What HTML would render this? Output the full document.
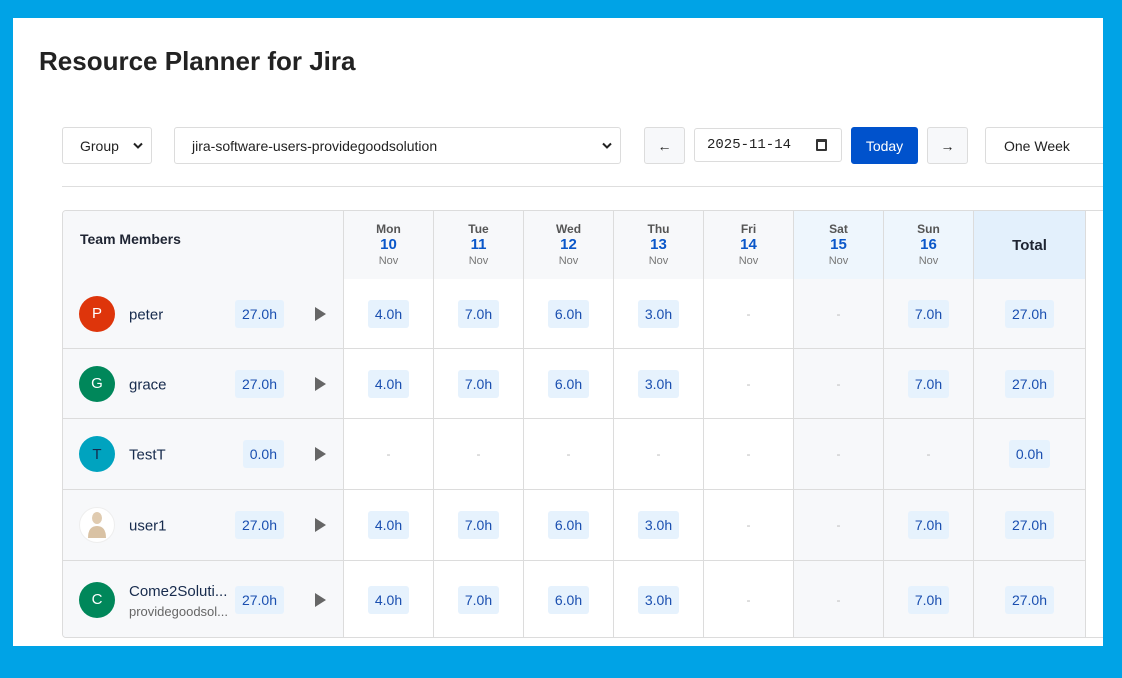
<!DOCTYPE html>
<html><head><meta charset="utf-8"><style>
*{box-sizing:border-box;margin:0;padding:0}
body{width:1122px;height:678px;background:#00a3e6;font-family:"Liberation Sans","DejaVu Sans",sans-serif;position:relative;overflow:hidden}
.panel{position:absolute;left:13px;top:18px;width:1090px;height:628px;background:#fff;overflow:hidden}
h1{position:absolute;left:26px;top:28px;font-size:26px;font-weight:bold;color:#222}
.ctl{position:absolute;top:109px;height:37px;border:1px solid #dcdcdc;border-radius:3px;background:#fff;font-size:14px;color:#222;display:flex;align-items:center}
.chev{position:absolute;right:8px;top:14px}
.hr{position:absolute;left:49px;top:168px;width:1050px;height:1px;background:#dedede}
.tbl{position:absolute;left:49px;top:192px;width:1100px;height:428px;border:1px solid #dcdcdc;border-radius:4px;overflow:hidden;background:#fff}
.row{position:absolute;left:0;display:grid;grid-template-columns:281px repeat(7,90px) 112px;width:1023px;border-bottom:1px solid #dcdcdc}
.row>div{border-right:1px solid #dcdcdc;display:flex;align-items:center;justify-content:center;position:relative}
.g{background:#f7f8fa}
.hd{text-align:center;flex-direction:column}
.hd b{display:block;font-size:12px;color:#555;line-height:14px}
.hd i{display:block;font-style:normal;font-weight:bold;font-size:15px;color:#0b57c9;line-height:18px}
.hd s{display:block;text-decoration:none;font-size:11px;color:#777;line-height:14px}
.bd{background:#e6f2fd;color:#1a4fb0;font-size:14px;border-radius:3px;height:28px;line-height:28px;padding:0 7px}
.dash{color:#bbb;font-size:12px}
.av{position:absolute;left:16px;top:50%;margin-top:-18px;width:36px;height:36px;border-radius:50%;color:#fff;font-size:15px;display:flex;align-items:center;justify-content:center}
.nm{position:absolute;left:66px;top:50%;transform:translateY(-45%);font-size:15px;color:#172b4d}
.nb{position:absolute;right:59px}
.tri{position:absolute;right:17px;width:0;height:0;border-left:11px solid #666;border-top:7px solid transparent;border-bottom:7px solid transparent}
</style></head><body>
<div class="panel">
<h1>Resource Planner for Jira</h1>
<div class="ctl" style="left:49px;width:90px;padding-left:17px">Group<svg class="chev" width="10" height="7" viewBox="0 0 10 7"><path d="M1 1.5L5 5.5L9 1.5" fill="none" stroke="#222" stroke-width="2"/></svg></div>
<div class="ctl" style="left:161px;width:447px;padding-left:17px">jira-software-users-providegoodsolution<svg class="chev" width="10" height="7" viewBox="0 0 10 7"><path d="M1 1.5L5 5.5L9 1.5" fill="none" stroke="#222" stroke-width="2"/></svg></div>
<div class="ctl" style="left:631px;width:41px;justify-content:center;background:#f7f8fa">&#8592;</div>
<div class="ctl" style="left:681px;width:148px;top:110px;height:34px;padding-left:12px;font-family:'Liberation Mono',monospace;font-size:14px">2025-11-14<span style="position:absolute;right:14px;width:11px;height:12px;border:2px solid #333;border-top-width:3px;border-radius:1px"></span></div>
<div class="ctl" style="left:838px;width:67px;background:#0052cc;border-color:#0052cc;color:#fff;justify-content:center">Today</div>
<div class="ctl" style="left:914px;width:41px;justify-content:center;background:#f7f8fa">&#8594;</div>
<div class="ctl" style="left:972px;width:140px;padding-left:18px">One Week</div>
<div class="hr"></div>
<div class="tbl">
<div class="row" style="top:0;height:68px;border-bottom:none">
<div class="g" style="justify-content:flex-start;align-items:flex-start;padding:20px 0 0 17px;font-weight:bold;font-size:14px;color:#1f2533">Team Members</div>
<div class="hd g"><b>Mon</b><i>10</i><s>Nov</s></div>
<div class="hd g"><b>Tue</b><i>11</i><s>Nov</s></div>
<div class="hd g"><b>Wed</b><i>12</i><s>Nov</s></div>
<div class="hd g"><b>Thu</b><i>13</i><s>Nov</s></div>
<div class="hd g"><b>Fri</b><i>14</i><s>Nov</s></div>
<div class="hd" style="background:#eef6fd"><b>Sat</b><i>15</i><s>Nov</s></div>
<div class="hd" style="background:#eef6fd"><b>Sun</b><i>16</i><s>Nov</s></div>
<div style="background:#e3f0fc;font-weight:bold;font-size:15px;color:#1f2533">Total</div>
</div>
<div class="row" style="top:68px;height:70px">
<div class="g"><div class="av" style="background:#de350b">P</div><div class="nm">peter</div><div class="bd nb">27.0h</div><div class="tri"></div></div>
<div><span class="bd">4.0h</span></div><div><span class="bd">7.0h</span></div><div><span class="bd">6.0h</span></div><div><span class="bd">3.0h</span></div><div><span class="dash">-</span></div><div class="g"><span class="dash">-</span></div><div class="g"><span class="bd">7.0h</span></div><div class="g"><span class="bd">27.0h</span></div>
</div>
<div class="row" style="top:138px;height:70px">
<div class="g"><div class="av" style="background:#00875a">G</div><div class="nm">grace</div><div class="bd nb">27.0h</div><div class="tri"></div></div>
<div><span class="bd">4.0h</span></div><div><span class="bd">7.0h</span></div><div><span class="bd">6.0h</span></div><div><span class="bd">3.0h</span></div><div><span class="dash">-</span></div><div class="g"><span class="dash">-</span></div><div class="g"><span class="bd">7.0h</span></div><div class="g"><span class="bd">27.0h</span></div>
</div>
<div class="row" style="top:208px;height:71px">
<div class="g"><div class="av" style="background:#00a3bf;color:#172b4d">T</div><div class="nm">TestT</div><div class="bd nb">0.0h</div><div class="tri"></div></div>
<div><span class="dash">-</span></div><div><span class="dash">-</span></div><div><span class="dash">-</span></div><div><span class="dash">-</span></div><div><span class="dash">-</span></div><div class="g"><span class="dash">-</span></div><div class="g"><span class="dash">-</span></div><div class="g"><span class="bd">0.0h</span></div>
</div>
<div class="row" style="top:279px;height:71px">
<div class="g"><div class="av" style="background:#fff;border:1px solid #eee"><svg width="24" height="30" viewBox="0 0 24 30"><ellipse cx="12" cy="8" rx="5" ry="6" fill="#e0cbb0"/><path d="M3 28 Q3 16 12 16 Q21 16 21 28 Z" fill="#d9c2a4"/></svg></div><div class="nm">user1</div><div class="bd nb">27.0h</div><div class="tri"></div></div>
<div><span class="bd">4.0h</span></div><div><span class="bd">7.0h</span></div><div><span class="bd">6.0h</span></div><div><span class="bd">3.0h</span></div><div><span class="dash">-</span></div><div class="g"><span class="dash">-</span></div><div class="g"><span class="bd">7.0h</span></div><div class="g"><span class="bd">27.0h</span></div>
</div>
<div class="row" style="top:350px;height:77px;border-bottom:none">
<div class="g"><div class="av" style="background:#00875a">C</div><div class="nm" style="line-height:20px">Come2Soluti...<br><span style="font-size:13px;color:#666">providegoodsol...</span></div><div class="bd nb">27.0h</div><div class="tri"></div></div>
<div><span class="bd">4.0h</span></div><div><span class="bd">7.0h</span></div><div><span class="bd">6.0h</span></div><div><span class="bd">3.0h</span></div><div><span class="dash">-</span></div><div class="g"><span class="dash">-</span></div><div class="g"><span class="bd">7.0h</span></div><div class="g"><span class="bd">27.0h</span></div>
</div>
</div>
</div>
</body></html>
